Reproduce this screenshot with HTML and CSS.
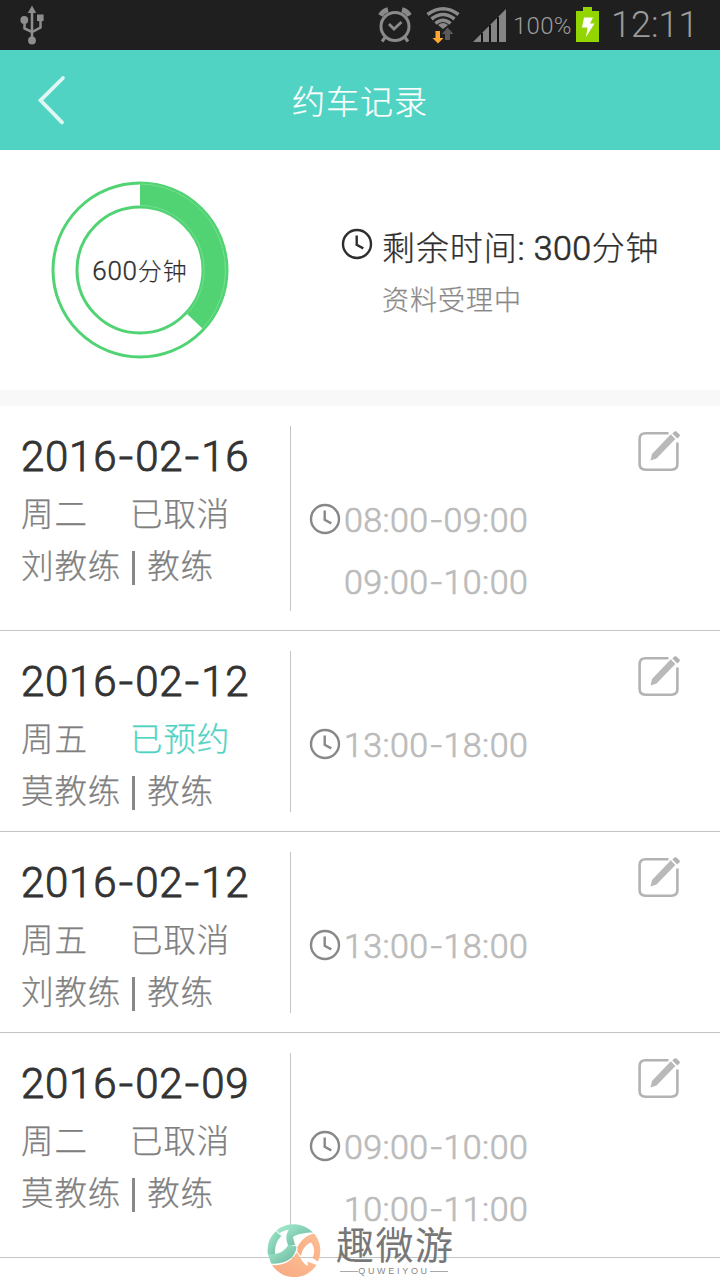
FILE: index.html
```html
<!DOCTYPE html>
<html lang="zh-CN">
<head>
<meta charset="utf-8">
<title>约车记录</title>
<link rel="stylesheet" href="styles.css">
</head>
<body>
<svg width="0" height="0" class="defs">
  <defs>
    <symbol id="clock" viewBox="0 0 32 32">
      <g fill="none" stroke="currentColor"><circle cx="16" cy="16" r="14" stroke-width="2.4"/><path d="M15.700 7.500v9.300l6.600 3.600" stroke-width="2.400"/></g>
    </symbol>
    <symbol id="edit" viewBox="0 0 44 42">
      <path d="M31.500 3.300H8.500Q2.600 3.300 2.600 9V34Q2.600 39.700 8.500 39.700H34.500Q40.400 39.700 40.400 34V12.500" fill="none" stroke="#b3b3b3" stroke-width="2.600"/>
      <path d="M33.800 4.300l4.600 4.600L19.500 28.500l-6 2 1.500-6.500z" fill="#b9b9b9"/>
      <path d="M35.300 3.500l2.500-2.200h1.400l3.600 3.400v1.400l-2.500 2.300z" fill="#b3b3b3"/>
    </symbol>
  </defs>
</svg>
<div class="screen">
  <div class="status">
    <svg class="usb" width="24" height="40" viewBox="0 0 24 40" fill="#8e8e8e">
      <path d="M12 .5l4.200 7.500H7.800z"/><circle cx="4.300" cy="15" r="3.900"/><rect x="17" y="9.500" width="6.600" height="6.600"/><circle cx="12" cy="35.500" r="3.900"/>
      <path d="M12 6v29M4.500 15v8.500l7.500 3.500 8.500-4.500V14" fill="none" stroke="#8e8e8e" stroke-width="2.500"/>
    </svg>
    <div class="tray">
      <svg class="alarm" width="34" height="36" viewBox="0 0 34 36" fill="none" stroke="#8a8a8a">
        <circle cx="17" cy="19.500" r="14" stroke-width="3"/>
        <path d="M11 17l5 5 7.500-7" stroke-width="2.800"/>
        <path d="M7 30.500l-3 4M27 30.500l3 4" stroke-width="3"/>
        <path d="M2.500 8.500Q5 4 10 2.800M31.500 8.500Q29 4 24 2.800" stroke-width="5"/>
      </svg>
      <svg class="wifi" width="34" height="38" viewBox="0 0 34 38">
        <g fill="none" stroke="#8a8a8a" stroke-width="3.500"><path d="M1.500 8.500Q17-3 32.500 8.500M5.500 13Q17 4 28.500 13M9.500 17.500Q17 11 24.500 17.500"/></g>
        <path d="M12 19Q17 15 22 19l-5 4z" fill="#8a8a8a"/>
        <path d="M21.500 21.500l6 6.500h-3.500v6h-5v-6h-3z" fill="#5a5a5a"/>
        <path d="M9.500 25h4.500v7h3.500L12 37.500 6.500 32h3z" fill="#ffa632"/>
      </svg>
      <svg class="signal" width="34" height="34" viewBox="0 0 34 34"><path d="M0 33L33 0v33z" fill="#858585"/><path d="M9 24v9M17 16v17M25 8v25" stroke="#080808" stroke-width="1.800"/></svg>
      <span class="percent">100%</span>
      <svg class="battery" width="23" height="35" viewBox="0 0 23 35"><path d="M7 0h9v4h7v31H0V4h7z" fill="#93d500"/><path d="M8 10.500h9l-3 6h4.500L10 30l1.500-9.500H6z" fill="#fff"/></svg>
      <span class="time-now">12:11</span>
    </div>
  </div>

  <header class="nav">
    <svg class="back" width="30" height="50" viewBox="0 0 30 50"><path d="M26 3L3.500 25.300 25 47.300" fill="none" stroke="#dff7f3" stroke-width="3.800" stroke-linecap="round"/></svg>
    <h1 class="title">约车记录</h1>
  </header>

  <section class="summary">
    <div class="ring">
      <svg width="180" height="180" viewBox="0 0 180 180">
        <path d="M90 2A88 88 0 0 1 153 149L136 133A64 64 0 0 0 90 26z" fill="#51d373"/>
        <g fill="none" stroke="#51d373" stroke-width="3"><circle cx="90" cy="90" r="87"/><circle cx="90" cy="90" r="63"/></g>
        <path d="M90 4A86 86 0 0 1 151 150M90 25.300A64.700 64.700 0 0 1 136 135" fill="none" stroke="#8be3a2" stroke-width=".6"/>
      </svg>
      <div class="ring-label"><span class="num">600</span>分钟</div>
    </div>
    <div class="remain">
      <div class="remain-line"><svg class="clock"><use href="#clock"/></svg><span class="remain-text">剩余时间<span class="num">: 300</span>分钟</span></div>
      <div class="state">资料受理中</div>
    </div>
  </section>

  <main class="list">
    <article class="row tall">
      <div class="info">
        <div class="date">2016<i>-</i>02<i>-</i>16</div>
        <div class="line"><span class="day">周二</span><span>已取消</span></div>
        <div class="line">刘教练<b class="bar"></b>教练</div>
      </div>
      <div class="slots">
        <svg class="clock"><use href="#clock"/></svg>
        <div class="times"><div>08:00<i>-</i>09:00</div><div>09:00<i>-</i>10:00</div></div>
      </div>
      <svg class="edit"><use href="#edit"/></svg>
    </article>
    <article class="row">
      <div class="info">
        <div class="date">2016<i>-</i>02<i>-</i>12</div>
        <div class="line"><span class="day">周五</span><span class="booked">已预约</span></div>
        <div class="line">莫教练<b class="bar"></b>教练</div>
      </div>
      <div class="slots">
        <svg class="clock"><use href="#clock"/></svg>
        <div class="times"><div>13:00<i>-</i>18:00</div></div>
      </div>
      <svg class="edit"><use href="#edit"/></svg>
    </article>
    <article class="row">
      <div class="info">
        <div class="date">2016<i>-</i>02<i>-</i>12</div>
        <div class="line"><span class="day">周五</span><span>已取消</span></div>
        <div class="line">刘教练<b class="bar"></b>教练</div>
      </div>
      <div class="slots">
        <svg class="clock"><use href="#clock"/></svg>
        <div class="times"><div>13:00<i>-</i>18:00</div></div>
      </div>
      <svg class="edit"><use href="#edit"/></svg>
    </article>
    <article class="row tall">
      <div class="info">
        <div class="date">2016<i>-</i>02<i>-</i>09</div>
        <div class="line"><span class="day">周二</span><span>已取消</span></div>
        <div class="line">莫教练<b class="bar"></b>教练</div>
      </div>
      <div class="slots">
        <svg class="clock"><use href="#clock"/></svg>
        <div class="times"><div>09:00<i>-</i>10:00</div><div>10:00<i>-</i>11:00</div></div>
      </div>
      <svg class="edit"><use href="#edit"/></svg>
    </article>
  </main>

  <div class="watermark">
    <svg width="54" height="54" viewBox="0 0 54 54">
      <defs>
        <linearGradient id="mint" x1="0" y1="0" x2="1" y2="1"><stop offset="0" stop-color="#a5efd0"/><stop offset="1" stop-color="#69b39e"/></linearGradient>
        <linearGradient id="peach" x1="0" y1="1" x2="1" y2="0"><stop offset="0" stop-color="#f9a880"/><stop offset="1" stop-color="#fcc096"/></linearGradient>
      </defs>
      <path d="M9.500 7.500A26.500 26.500 0 0 1 46 9.500C38 9.500 30 11 26 14L28 22 21 22C18.500 16 19 11 22 6.500 17 7 14 9 12.500 10.500z" fill="url(#mint)"/>
      <path d="M9 8A26.500 26.500 0 0 0 1 32L8 32C7.500 23 10 17 14.500 13z" fill="url(#mint)"/>
      <path d="M1 31C12 32 18 28 21.500 21.500L29.500 23.500C29 34 19 42 4 40.500z" fill="url(#mint)"/>
      <path d="M30.500 24C34 17 40 12 47 10.500A26.500 26.500 0 0 1 51 38.500L45.500 35C48.500 28 47 23 44 19.500 38 22 35 27 34 33L30.500 29z" fill="url(#peach)"/>
      <path d="M5 42C16 43 25 38 29.500 29.500C34 33 34 40 41 43L40.500 38.500 49.500 42A26.500 26.500 0 0 1 5 42z" fill="url(#peach)"/>
      <path d="M9 8l8 7" stroke="#e5fff6" stroke-width="1"/>
    </svg>
    <div class="brand"><div class="brand-cn">趣微游</div><div class="brand-en"><span>QUWEIYOU</span></div></div>
  </div>
</div>
</body>
</html>
```
FILE: styles.css
```css
* { box-sizing: border-box; }
body { margin: 0; background: #fff; }
i, b { font-style: normal; font-weight: inherit; }
.defs { position: absolute; }
.screen { position: relative; width: 720px; height: 1280px; overflow: hidden; background: #fff; font-family: "Noto Sans CJK SC", sans-serif; font-weight: 300; white-space: nowrap; -webkit-text-stroke: .25px currentColor; }
.num { font-family: Roboto, sans-serif; font-weight: 300; }

.status { height: 50px; background: #1f1f1f; display: flex; justify-content: space-between; padding-left: 20px; padding-right: 24px; }
.usb { margin-top: 5px; }
.tray { display: flex; font-family: Roboto, sans-serif; color: #9b9b9b; -webkit-text-stroke: 0; }
.alarm { margin: 7px 14px 0 0; }
.wifi { margin: 6px 13px 0 0; }
.signal { margin: 9px 6px 0 0; }
.percent { width: 63px; font-size: 24px; line-height: 52px; font-weight: 300; letter-spacing: .3px; }
.battery { margin-top: 7px; }
.time-now { width: 85px; margin-left: 12px; font-size: 36px; line-height: 50px; font-weight: 300; }

.nav { height: 100px; background: #50d3c3; display: flex; align-items: center; padding: 0 37px; }
.title { flex: 1; margin: 0 30px 0 0; text-align: center; font-size: 33px; line-height: 50px; font-weight: 300; letter-spacing: 1px; color: #fff; }

.summary { height: 256px; display: flex; padding: 30px 0 0 50px; border-bottom: 16px solid #f8f8f8; }
.ring { display: grid; width: 180px; height: 180px; place-items: center; }
.ring > * { grid-area: 1 / 1; }
.ring-label { font-size: 24px; line-height: 34px; letter-spacing: 1px; color: #2e2e2e; -webkit-text-stroke-width: .15px; }
.ring-label .num { font-size: 26px; letter-spacing: .8px; -webkit-text-stroke-width: .35px; }
.remain { margin-left: 111px; padding-top: 42px; }
.remain-line { display: flex; height: 50px; align-items: center; color: #2e2e2e; font-size: 33px; line-height: 50px; }
.remain-line .clock { margin-bottom: 6px; }
.clock { width: 32px; height: 32px; flex: none; }
.remain-text { margin-left: 9px; letter-spacing: .9px; }
.remain-text .num { font-size: 34px; letter-spacing: .4px; -webkit-text-stroke-width: .7px; }
.state { margin: 7px 0 0 41px; font-size: 27px; line-height: 40px; letter-spacing: 1px; color: #888; }

.row { display: flex; height: 201px; padding: 20px 39px 19px 0; border-bottom: 1px solid #c4c4c4; }
.row.tall { height: 225px; }
.info { width: 291px; padding-left: 21px; border-right: 1px solid #c4c4c4; color: #808080; }
.date { font-family: Roboto, sans-serif; font-weight: 300; font-size: 42px; line-height: 62px; letter-spacing: .75px; color: #333; -webkit-text-stroke-width: .9px; }
.date i { display: inline-block; width: 18px; text-align: center; transform: scaleX(1.2); letter-spacing: 0; }
.line { display: flex; align-items: center; height: 52px; padding-bottom: 4px; font-size: 32.500px; line-height: 48px; letter-spacing: .9px; }
.day { width: 109px; }
.booked { color: #50d3c3; }
.bar { width: 3px; height: 34px; margin: 8px 12px 0 11px; background: #888; }
.slots { display: flex; flex: 1; padding: 63px 0 0 18px; align-items: flex-start; color: #888; }
.slots .clock { margin-top: 14px; }
.times { margin-left: 3px; font-family: Roboto, sans-serif; font-size: 34px; line-height: 62px; font-weight: 300; letter-spacing: .4px; color: #bbb; -webkit-text-stroke-width: .7px; }
.times i { display: inline-block; width: 15px; text-align: center; transform: scaleX(1.2); }
.edit { width: 44px; height: 42px; margin-top: 4px; }

.watermark { position: absolute; left: 267px; top: 1223px; display: flex; gap: 15px; -webkit-text-stroke-width: 0; }
.brand { margin-top: -2px; }
.brand-cn { font-size: 38px; line-height: 44px; letter-spacing: 1.500px; font-weight: 400; color: #777; }
.brand-en { display: flex; align-items: center; font-family: "Liberation Sans", sans-serif; font-weight: 400; font-size: 9px; line-height: 10px; letter-spacing: 2.700px; color: #888; margin: 1px 0 0 4px; width: 108px; }
.brand-en::before, .brand-en::after { content: ""; flex: 1; height: 1px; background: #aaa; }
```
